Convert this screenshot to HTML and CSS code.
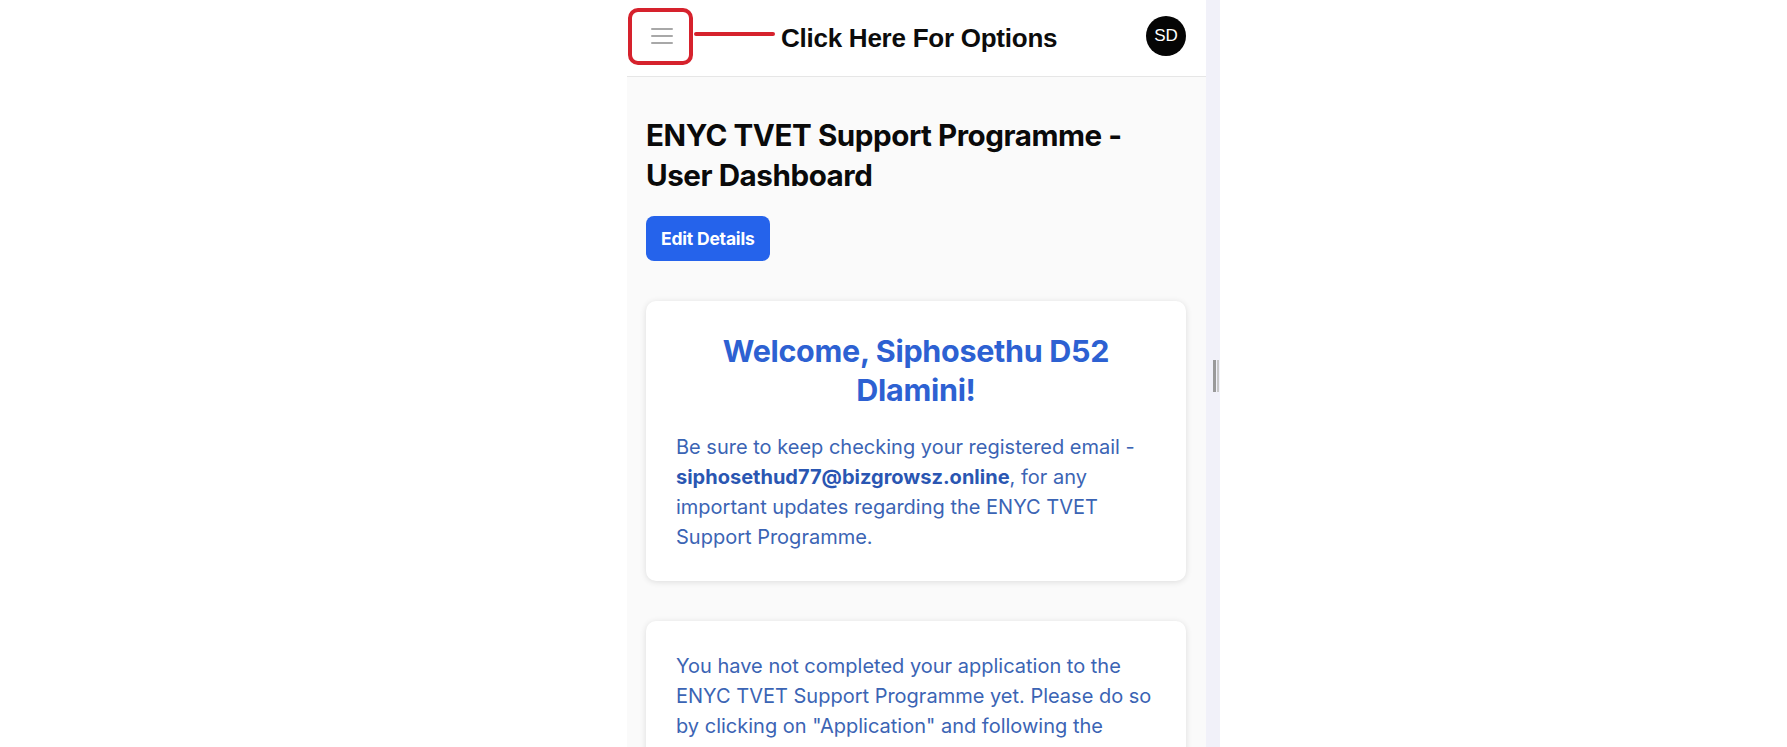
FILE: index.html
```html
<!DOCTYPE html>
<html lang="en">
<head>
<meta charset="utf-8">
<title>ENYC TVET Support Programme - User Dashboard</title>
<link rel="stylesheet" href="styles.css">
</head>
<body>
<div class="page">
  <div class="gutter"></div>
  <div class="panel">
    <header class="topbar">
      <div class="menu-wrap">
        <button class="menu-btn" aria-label="Menu">
          <span></span><span></span><span></span>
        </button>
        <div class="menu-ring"></div>
      </div>
      <div class="pointer"></div>
      <div class="hint">Click Here For Options</div>
      <div class="avatar">SD</div>
    </header>
    <main class="content">
      <h1 class="title">ENYC TVET Support Programme - User Dashboard</h1>
      <button class="edit-btn">Edit Details</button>
      <section class="card welcome">
        <h2 class="welcome-title">Welcome, Siphosethu D52 Dlamini!</h2>
        <p class="card-text">Be sure to keep checking your registered email - <strong>siphosethud77@bizgrowsz.online</strong>, for any important updates regarding the ENYC TVET Support Programme.</p>
      </section>
      <section class="card notice">
        <p class="card-text">You have not completed your application to the ENYC TVET Support Programme yet. Please do so by clicking on "Application" and following the instructions provided.</p>
      </section>
    </main>
  </div>
  <div class="divider">
    <div class="handle"></div>
  </div>
  <div class="rest"></div>
</div>
</body>
</html>
```
FILE: styles.css
```css
* { box-sizing: border-box; }
html, body { margin: 0; padding: 0; background: #ffffff; }
body { font-family: Inter, "Noto Sans", sans-serif; overflow: hidden; }

.page { display: flex; height: 747px; }
.gutter { width: 627px; flex: none; background: #ffffff; }
.panel { width: 579px; flex: none; background: #fafafa; }
.divider { width: 14px; flex: none; background: #f1f1f9; display: flex; justify-content: flex-end; }
.handle { margin-top: 360px; width: 6px; height: 32px; border-left: 3px solid #9a9a9a; border-right: 2px solid #c8c8c8; margin-right: 1px; }
.rest { flex: 1; background: #ffffff; }

.topbar { height: 77px; background: #ffffff; border-bottom: 1px solid #e6e6e6; display: flex; align-items: center; padding: 0 20px 0 19px; }
.menu-wrap { position: relative; width: 34px; height: 40px; display: flex; align-items: center; justify-content: center; }
.menu-btn { border: 0; background: transparent; padding: 0; width: 22px; height: 16px; display: flex; flex-direction: column; justify-content: space-between; margin-top: -4px; margin-left: -3px; }
.menu-btn span { display: block; height: 2px; background: #a8a8a8; border-radius: 1px; }
.menu-ring { position: absolute; left: -18px; top: -10px; width: 65px; height: 57px; border: 4px solid #d6222d; border-radius: 10px; }
.pointer { width: 81px; height: 4px; background: #d6222d; margin-left: 14px; margin-top: -8px; border-radius: 2px; }
.hint { font-family: "Liberation Sans", Arial, sans-serif; font-weight: 700; font-size: 26px; color: #0c0c0c; margin-left: 6px; margin-top: 0; letter-spacing: -0.25px; }
.avatar { margin-left: auto; width: 40px; height: 40px; border-radius: 50%; background: #050505; color: #ffffff; display: flex; align-items: center; justify-content: center; font-family: "Liberation Sans", Arial, sans-serif; font-size: 17px; margin-top: -4px; }

.content { padding: 38px 20px 0 19px; }
.title { margin: 0; font-size: 29.6px; line-height: 40px; font-weight: 700; color: #0a0a0a; letter-spacing: -0.45px; }
.edit-btn { margin-top: 21px; height: 45px; padding: 0 15px; border: 0; border-radius: 8px; background: #2563eb; color: #ffffff; font-family: Inter, sans-serif; font-weight: 700; font-size: 17.5px; letter-spacing: -0.2px; }

.card { background: #ffffff; border-radius: 10px; box-shadow: 0 1px 6px rgba(0, 0, 0, 0.12); padding: 30px 30px 29px; }
.welcome { margin-top: 40px; }
.notice { margin-top: 40px; padding-top: 30px; }
.welcome-title { margin: 0 0 23px; text-align: center; font-size: 30.5px; line-height: 39px; font-weight: 700; color: #2d61d2; letter-spacing: -0.3px; }
.card-text { margin: 0; font-size: 20px; line-height: 30px; color: #3b64b4; }
.card-text strong { font-weight: 700; color: #2a56b2; }
```
